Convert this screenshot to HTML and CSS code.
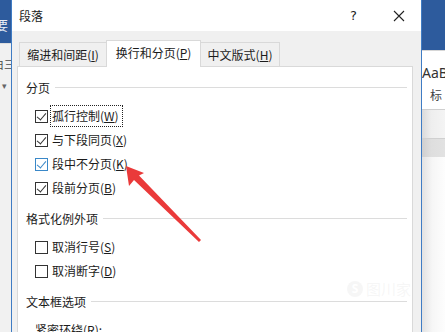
FILE: index.html
```html
<!DOCTYPE html>
<html lang="zh-CN">
<head>
<meta charset="utf-8">
<title>段落</title>
<link rel="stylesheet" href="styles.css">
</head>
<body>
<div class="left-strip">
  <div class="ls-blue"><span class="ls-char">要</span></div>
  <div class="ls-light">
    <span class="ls-icon">白三</span>
    <span class="ls-drop">▾</span>
  </div>
</div>

<div class="dialog">
  <div class="titlebar">
    <span class="title">段落</span>
    <span class="tb-btn">?</span>
    <span class="tb-btn tb-close">
      <svg width="12" height="12" viewBox="0 0 12 12"><path d="M1 1L11 11M11 1L1 11" stroke="#222" stroke-width="1.1" fill="none"/></svg>
    </span>
  </div>
  <div class="body">
    <div class="tabs">
      <div class="tab tab-1">缩进和间距(<u>I</u>)</div>
      <div class="tab tab-active">换行和分页(<u>P</u>)</div>
      <div class="tab tab-3">中文版式(<u>H</u>)</div>
    </div>
    <div class="panel">
      <div class="section">
        <div class="sec-head"><span>分页</span><i class="rule"></i></div>
        <div class="rows">
          <div class="row"><span class="cb on"></span><span class="lbl focus">孤行控制(<u>W</u>)</span></div>
          <div class="row"><span class="cb on"></span><span class="lbl">与下段同页(<u>X</u>)</span></div>
          <div class="row"><span class="cb on hover"></span><span class="lbl">段中不分页(<u>K</u>)</span></div>
          <div class="row"><span class="cb on"></span><span class="lbl">段前分页(<u>B</u>)</span></div>
        </div>
      </div>
      <div class="section">
        <div class="sec-head"><span>格式化例外项</span><i class="rule"></i></div>
        <div class="rows">
          <div class="row"><span class="cb"></span><span class="lbl">取消行号(<u>S</u>)</span></div>
          <div class="row"><span class="cb"></span><span class="lbl">取消断字(<u>D</u>)</span></div>
        </div>
      </div>
      <div class="section">
        <div class="sec-head"><span>文本框选项</span><i class="rule"></i></div>
        <div class="rows">
          <div class="row plain"><span class="lbl">紧密环绕(<u>R</u>):</span></div>
        </div>
      </div>
    </div>
  </div>
</div>

<div class="right-strip">
  <div class="rs-blue"></div>
  <div class="rs-styles">
    <span class="rs-aa">AaB</span>
    <span class="rs-biao">标</span>
  </div>
  <div class="rs-band1"></div>
  <div class="rs-band2"></div>
  <div class="rs-rest"></div>
</div>

<svg class="arrow" width="445" height="332" viewBox="0 0 445 332">
  <polygon points="126,166 144,173 139,175.5 201,240 199,242 134,180 129,186" fill="#ea3a3a"/>
</svg>
<div class="watermark"><span class="wm-s">S</span>图川家</div>
</body>
</html>
```
FILE: styles.css
```css
* { box-sizing: border-box; }
html, body { margin: 0; padding: 0; }
body {
  width: 445px;
  height: 332px;
  overflow: hidden;
  display: flex;
  position: relative;
  font-family: "Noto Sans CJK SC", "Noto Sans", sans-serif;
  font-size: 12px;
  color: #1b1b1b;
  background: #fff;
}
u { text-decoration: underline; text-underline-offset: 1px; }

/* left background strip */
.left-strip { width: 11px; flex: none; display: flex; flex-direction: column; overflow: hidden; }
.ls-blue { height: 43px; background: #2d5b9d; position: relative; }
.ls-char { position: absolute; left: -5px; top: 17px; color: #e9eef6; font-size: 13px; line-height: 16px; white-space: nowrap; }
.ls-light { flex: 1; background: #f1f1f1; position: relative; border-top: 1px solid #dedede; }
.ls-icon { position: absolute; left: -7px; top: 13px; color: #4a4a4a; font-size: 11px; line-height: 14px; white-space: nowrap; }
.ls-drop { position: absolute; left: 2px; top: 37px; color: #666; font-size: 9px; line-height: 10px; }

/* dialog */
.dialog {
  width: 411px;
  flex: none;
  display: flex;
  flex-direction: column;
  border-left: 1px solid #3f7cc4;
  border-right: 1px solid #3f7cc4;
  background: #f0f0f0;
}
.titlebar {
  height: 31px;
  background: #fff;
  display: flex;
  align-items: center;
  padding-left: 7px;
}
.title { flex: 1; font-size: 12px; color: #222; line-height: 16px; }
.tb-btn {
  width: 45px;
  height: 31px;
  display: flex;
  align-items: center;
  justify-content: center;
  font-family: "DejaVu Sans", sans-serif;
  font-size: 13px;
  color: #222;
}
.body { flex: 1; display: flex; flex-direction: column; padding: 9px 8px 0 5px; }
.tabs { display: flex; align-items: flex-end; height: 26px; padding-left: 2px; }
.tab {
  height: 24px;
  border: 1px solid #d9d9d9;
  border-bottom: none;
  display: flex;
  align-items: center;
  justify-content: center;
  background: #f0f0f0;
  line-height: 16px;
  white-space: nowrap;
}
.tab-1 { width: 87px; border-right: none; }
.tab-active {
  width: 95px;
  height: 27px;
  background: #fff;
  margin-bottom: -1px;
  position: relative;
  z-index: 1;
  padding-bottom: 2px;
}
.tab-3 { width: 79px; border-left: none; }

.panel {
  flex: 1;
  background: #fff;
  border: 1px solid #d9d9d9;
  border-bottom: none;
  padding: 12px 5px 0 8px;
}
.section + .section { margin-top: 10px; }
.sec-head { display: flex; align-items: center; gap: 5px; height: 18px; line-height: 18px; }
.rule { flex: 1; height: 1px; background: #dcdcdc; margin-top: -1px; }
.rows { margin-top: 7px; display: flex; flex-direction: column; }
.row {
  height: 24px;
  display: flex;
  align-items: center;
  gap: 4px;
  padding-left: 9px;
}
.row.plain { padding-left: 9px; }
.lbl { line-height: 18px; white-space: nowrap; }
.lbl.focus { border: 1px dotted #222; padding: 1px 3px 1px 1px; margin-left: -2px; }
.cb {
  width: 13px;
  height: 13px;
  border: 1px solid #333;
  background: #fff;
  flex: none;
  position: relative;
}
.cb.on::after {
  content: "";
  position: absolute;
  left: 3px;
  top: 0px;
  width: 4px;
  height: 8px;
  border-right: 1.3px solid #333;
  border-bottom: 1.3px solid #333;
  transform: rotate(40deg);
}
.cb.hover { border-color: #3a88c8; }
.cb.hover::after { border-color: #3a88c8; }

/* right background strip */
.right-strip { flex: 1; display: flex; flex-direction: column; overflow: hidden; }
.rs-blue { height: 50px; background: #2d5b9d; flex: none; }
.rs-styles {
  height: 60px;
  flex: none;
  background: #fff;
  border-bottom: 1px solid #cfcfcf;
  border-top: 1px solid #d6d6d6;
  display: flex;
  flex-direction: column;
  padding-top: 13px;
  white-space: nowrap;
}
.rs-aa { font-family: "Noto Sans", sans-serif; font-size: 14px; line-height: 18px; margin-left: 0; color: #333; }
.rs-biao { font-size: 12px; line-height: 16px; margin-left: 8px; margin-top: 5px; color: #444; }
.rs-band1 { height: 28px; flex: none; background: linear-gradient(90deg, #dadada, #eeeeee 40%, #f4f4f4); }
.rs-band2 { height: 19px; flex: none; background: linear-gradient(90deg, #cfcfcf, #dedede 40%, #e2e2e2); border-top: 1px solid #d0d0d0; }
.rs-rest { flex: 1; background: linear-gradient(90deg, #e2e2e2, #f6f6f6 45%, #fdfdfd); }

/* overlays */
.arrow { position: absolute; left: 0; top: 0; pointer-events: none; }
.watermark {
  position: absolute;
  left: 347px;
  top: 280px;
  font-size: 15px;
  line-height: 18px;
  color: rgba(215,215,215,0.22);
  display: flex;
  align-items: center;
  gap: 3px;
}
.wm-s {
  width: 16px; height: 16px; border-radius: 50%;
  background: rgba(215,215,215,0.22);
  color: #fff;
  font-size: 12px;
  display: flex; align-items: center; justify-content: center;
  font-family: "Noto Sans", sans-serif; font-weight: bold;
}
```
